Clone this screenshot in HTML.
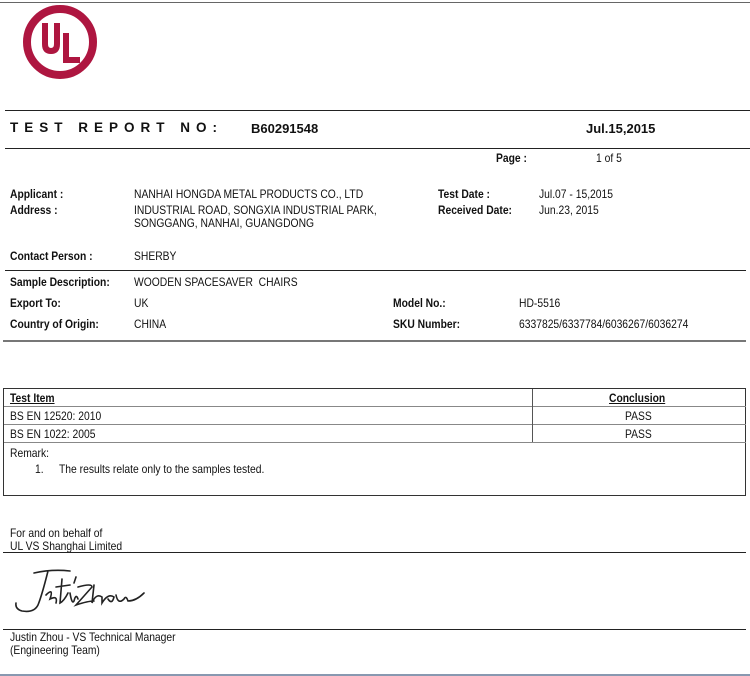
<!DOCTYPE html>
<html><head><meta charset="utf-8"><style>
body{margin:0;width:750px;height:676px;background:#fff;position:relative;overflow:hidden;font-family:"Liberation Sans",Arial,sans-serif;color:#111}
.t{position:absolute;font-size:12px;line-height:12px;white-space:nowrap;transform:scaleX(.86);transform-origin:left center}
.b{font-weight:bold}
.l{position:absolute;height:1px;background:#222}
.v{position:absolute;width:1px;background:#555}
</style></head><body>
<div class="l" style="left:0;top:2px;width:750px;background:#666"></div>
<svg style="position:absolute;left:22px;top:5px" width="78" height="76" viewBox="0 0 78 76">
<circle cx="38" cy="37" r="33" fill="none" stroke="#ae1640" stroke-width="8"/>
<path d="M20 18 h6 v21 q0 4 3 4 q3 0 3-4 v-21 h6 v21 q0 10-9 10 q-9 0-9-10z" fill="#ae1640"/>
<path d="M41 28 h6 v24 h11 v6 h-17z" fill="#ae1640"/>
</svg>
<div class="l" style="left:5px;top:110px;width:745px"></div>
<div class="t b" style="left:10px;top:122px;font-size:13.5px;letter-spacing:6px;transform:none">TEST REPORT NO:</div>
<div class="t b" style="left:251px;top:123px;font-size:13px;transform:none">B60291548</div>
<div class="t b" style="left:586px;top:123px;font-size:13px;transform:none">Jul.15,2015</div>
<div class="l" style="left:5px;top:148px;width:745px"></div>
<div class="t b" style="left:496px;top:152px">Page :</div>
<div class="t" style="left:596px;top:152px">1 of 5</div>
<div class="t b" style="left:10px;top:188px">Applicant :</div>
<div class="t" style="left:134px;top:188px">NANHAI HONGDA METAL PRODUCTS CO., LTD</div>
<div class="t b" style="left:438px;top:188px">Test Date :</div>
<div class="t" style="left:539px;top:188px">Jul.07 - 15,2015</div>
<div class="t b" style="left:10px;top:204px">Address :</div>
<div class="t" style="left:134px;top:204px">INDUSTRIAL ROAD, SONGXIA INDUSTRIAL PARK,</div>
<div class="t" style="left:134px;top:217px">SONGGANG, NANHAI, GUANGDONG</div>
<div class="t b" style="left:438px;top:204px">Received Date:</div>
<div class="t" style="left:539px;top:204px">Jun.23, 2015</div>
<div class="t b" style="left:10px;top:250px">Contact Person :</div>
<div class="t" style="left:134px;top:250px">SHERBY</div>
<div class="l" style="left:5px;top:270px;width:741px"></div>
<div class="t b" style="left:10px;top:276px">Sample Description:</div>
<div class="t" style="left:134px;top:276px">WOODEN SPACESAVER&nbsp; CHAIRS</div>
<div class="t b" style="left:10px;top:297px">Export To:</div>
<div class="t" style="left:134px;top:297px">UK</div>
<div class="t b" style="left:393px;top:297px">Model No.:</div>
<div class="t" style="left:519px;top:297px">HD-5516</div>
<div class="t b" style="left:10px;top:318px">Country of Origin:</div>
<div class="t" style="left:134px;top:318px">CHINA</div>
<div class="t b" style="left:393px;top:318px">SKU Number:</div>
<div class="t" style="left:519px;top:318px">6337825/6337784/6036267/6036274</div>
<div class="l" style="left:3px;top:340px;width:743px;height:2px;background:#777"></div>
<div style="position:absolute;left:3px;top:388px;width:741px;height:106px;border:1px solid #333"></div>
<div class="l" style="left:4px;top:406px;width:742px;background:#888"></div>
<div class="l" style="left:4px;top:424px;width:742px;background:#888"></div>
<div class="l" style="left:4px;top:442px;width:742px;background:#888"></div>
<div class="v" style="left:532px;top:389px;height:53px"></div>
<div class="t b" style="left:10px;top:392px;text-decoration:underline">Test Item</div>
<div class="t b" style="left:609px;top:392px;text-decoration:underline">Conclusion</div>
<div class="t" style="left:10px;top:410px">BS EN 12520: 2010</div>
<div class="t" style="left:625px;top:410px">PASS</div>
<div class="t" style="left:10px;top:428px">BS EN 1022: 2005</div>
<div class="t" style="left:625px;top:428px">PASS</div>
<div class="t" style="left:10px;top:447px">Remark:</div>
<div class="t" style="left:35px;top:463px">1.</div>
<div class="t" style="left:59px;top:463px">The results relate only to the samples tested.</div>
<div class="t" style="left:10px;top:527px">For and on behalf of</div>
<div class="t" style="left:10px;top:540px">UL VS Shanghai Limited</div>
<div class="l" style="left:3px;top:552px;width:743px"></div>
<svg style="position:absolute;left:12px;top:565px" width="150" height="50" viewBox="0 0 150 50">
<path d="M22 8 Q40 4 58 6 M36 6 Q30 30 26 40 Q22 48 10 46 Q3 44 4 38 M34 30 Q42 22 38 34 Q46 30 44 38 M50 14 L48 38 Q52 36 56 28 M44 22 L58 20 M58 28 Q60 40 62 36 Q64 28 66 34 M62 18 L64 12 M66 22 Q80 18 80 22 L64 40 Q76 36 82 36 M82 20 L80 38 Q84 28 90 32 L90 38 Q96 28 102 32 Q100 40 96 34 M104 30 Q106 40 112 34 Q114 30 116 36 Q124 36 132 28" fill="none" stroke="#222" stroke-width="1.6" stroke-linecap="round"/>
</svg>
<div class="l" style="left:3px;top:629px;width:743px"></div>
<div class="t" style="left:10px;top:631px">Justin Zhou - VS Technical Manager</div>
<div class="t" style="left:10px;top:644px">(Engineering Team)</div>
<div class="l" style="left:0;top:674px;width:750px;height:2px;background:#8898b0"></div>
</body></html>
